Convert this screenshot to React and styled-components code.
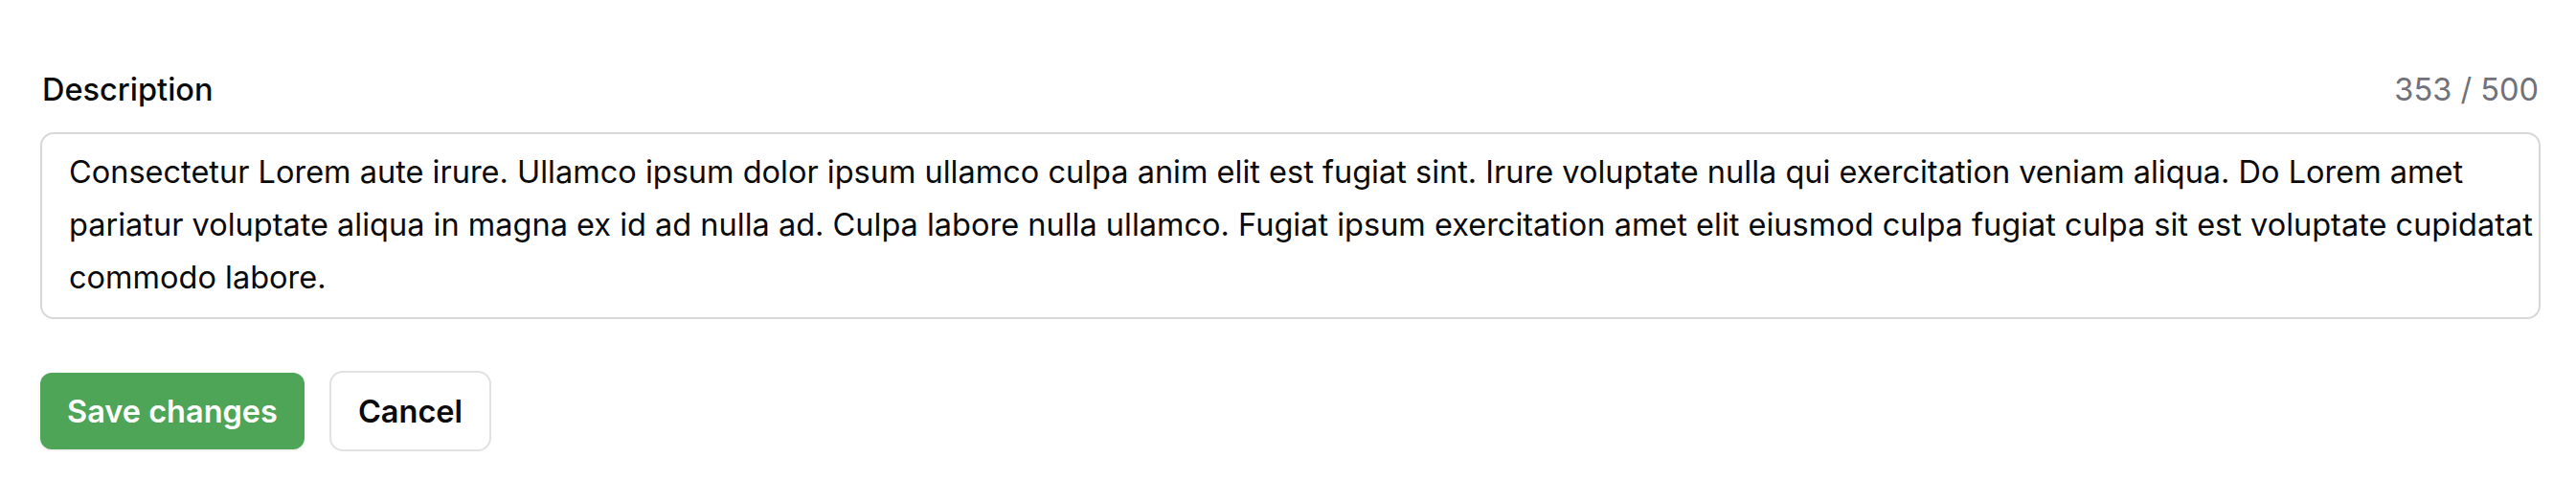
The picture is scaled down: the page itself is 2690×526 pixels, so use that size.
import React, { useState } from "react";
import styled, { createGlobalStyle } from "styled-components";

const MAX = 500;

const initialText =
  "Consectetur Lorem aute irure. Ullamco ipsum dolor ipsum ullamco culpa anim elit est fugiat sint. Irure voluptate nulla qui exercitation veniam aliqua. Do Lorem amet pariatur voluptate aliqua in magna ex id ad nulla ad. Culpa labore nulla ullamco. Fugiat ipsum exercitation amet elit eiusmod culpa fugiat culpa sit est voluptate cupidatat commodo labore.";

export default function App() {
  const [text, setText] = useState(initialText);

  return (
    <>
      <GlobalStyle />
      <Page>
        <Field>
          <LabelRow>
            <Label htmlFor="description">Description</Label>
            <Counter>
              {text.length} / {MAX}
            </Counter>
          </LabelRow>
          <TextArea
            id="description"
            value={text}
            maxLength={MAX}
            onChange={(e) => setText(e.target.value)}
          />
        </Field>
        <Actions>
          <Button $variant="primary">Save changes</Button>
          <Button $variant="secondary" onClick={() => setText(initialText)}>
            Cancel
          </Button>
        </Actions>
      </Page>
    </>
  );
}

const GlobalStyle = createGlobalStyle`
  html, body {
    margin: 0;
    background: #ffffff;
  }
  body {
    font-family: Inter, "Noto Sans", sans-serif;
    color: #0a0a0a;
  }
`;

const Page = styled.div`
  padding: 74px 37px 0 42px;
  display: flex;
  flex-direction: column;
  gap: 54px;
`;

const Field = styled.div`
  display: flex;
  flex-direction: column;
  gap: 24px;
`;

const LabelRow = styled.div`
  display: flex;
  justify-content: space-between;
  align-items: baseline;
  padding: 0 2px 0 2px;
  line-height: 40px;
  font-size: 32.5px;
`;

const Label = styled.label`
  font-weight: 500;
  color: #0a0a0a;
`;

const Counter = styled.span`
  color: #71717a;
`;

const TextArea = styled.textarea`
  box-sizing: border-box;
  width: 100%;
  height: 195px;
  margin: 0;
  padding: 12px 6px 12px 28px;
  border: 2px solid #d8d8d8;
  border-radius: 14px;
  font-family: Inter, "Noto Sans", sans-serif;
  font-size: 32.5px;
  line-height: 55px;
  color: #0a0a0a;
  resize: none;
  outline: none;
  overflow: hidden;
`;

const Actions = styled.div`
  display: flex;
  align-items: center;
  gap: 26px;
`;

const Button = styled.button`
  box-sizing: border-box;
  font-family: Inter, "Noto Sans", sans-serif;
  font-size: 32.5px;
  font-weight: 600;
  cursor: pointer;
  padding: 0 28px;
  height: ${({ $variant }) => ($variant === "primary" ? "80px" : "84px")};
  border-radius: ${({ $variant }) => ($variant === "primary" ? "12px" : "14px")};
  border: ${({ $variant }) =>
    $variant === "primary" ? "none" : "2px solid #e2e2e2"};
  background: ${({ $variant }) => ($variant === "primary" ? "#4ea457" : "#ffffff")};
  color: ${({ $variant }) => ($variant === "primary" ? "#ffffff" : "#0a0a0a")};
  box-shadow: ${({ $variant }) =>
    $variant === "primary" ? "0 2px 4px rgba(0, 0, 0, 0.08)" : "none"};
`;
